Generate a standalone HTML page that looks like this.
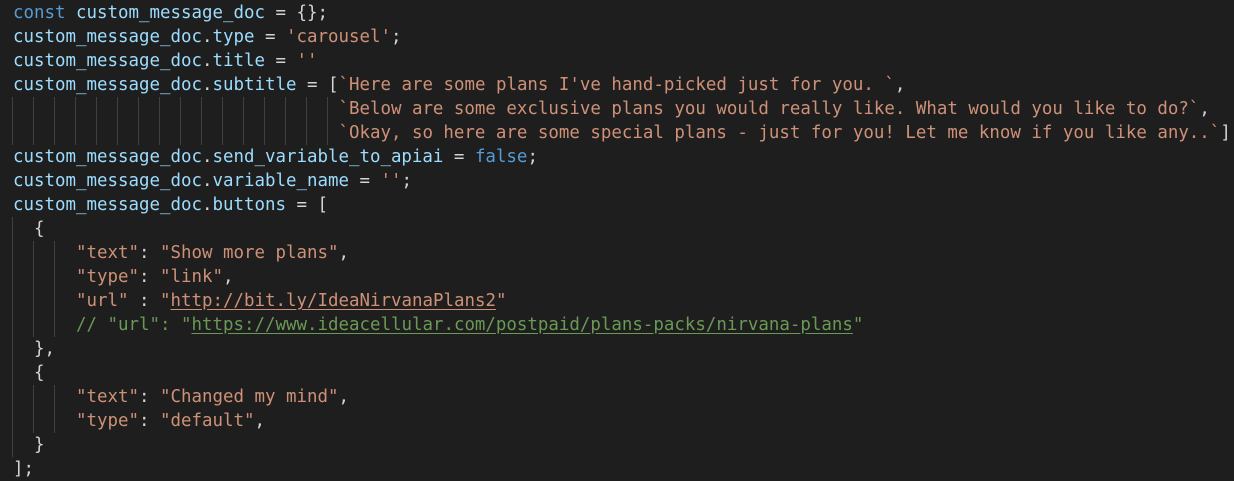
<!DOCTYPE html>
<html><head><meta charset="utf-8"><style>
html,body{margin:0;padding:0;background:#1e1e1e;width:1234px;height:478px;overflow:hidden}
pre{position:absolute;left:13px;top:1px;margin:0;font-family:"DejaVu Sans Mono","Liberation Mono",monospace;font-size:17.45px;line-height:24px;color:#d4d4d4;white-space:pre}
.v{color:#9cdcfe}.k{color:#569cd6}.s{color:#ce9178}.c{color:#6a9955}
.u{text-decoration:underline;text-underline-offset:3px}
.g{position:absolute;width:1px;background:#404040}
</style></head><body>
<div id="guides"></div>
<pre><span class="k">const</span> <span class="v">custom_message_doc</span> = {};
<span class="v">custom_message_doc</span>.<span class="v">type</span> = <span class="s">'carousel'</span>;
<span class="v">custom_message_doc</span>.<span class="v">title</span> = <span class="s">''</span>
<span class="v">custom_message_doc</span>.<span class="v">subtitle</span> = [<span class="s">`Here are some plans I've hand-picked just for you. `</span>,
                               <span class="s">`Below are some exclusive plans you would really like. What would you like to do?`</span>,
                               <span class="s">`Okay, so here are some special plans - just for you! Let me know if you like any..`</span>]
<span class="v">custom_message_doc</span>.<span class="v">send_variable_to_apiai</span> = <span class="k">false</span>;
<span class="v">custom_message_doc</span>.<span class="v">variable_name</span> = <span class="s">''</span>;
<span class="v">custom_message_doc</span>.<span class="v">buttons</span> = [
  {
      <span class="s">"text"</span>: <span class="s">"Show more plans"</span>,
      <span class="s">"type"</span>: <span class="s">"link"</span>,
      <span class="s">"url"</span> : <span class="s">"<span class="u">http://bit.ly/IdeaNirvanaPlans2</span>"</span>
      <span class="c">// "url": "<span class="u">https://www.ideacellular.com/postpaid/plans-packs/nirvana-plans</span>"</span>
  },
  {
      <span class="s">"text"</span>: <span class="s">"Changed my mind"</span>,
      <span class="s">"type"</span>: <span class="s">"default"</span>,
  }
];</pre>
<script>
var G=document.getElementById('guides'),h='';
function g(col,l0,l1){h+='<div class="g" style="left:'+(12+col*10.5).toFixed(1)+'px;top:'+(1+24*l0)+'px;height:'+(24*(l1-l0+1))+'px"></div>';}
for(var c=0;c<=30;c+=2)g(c,4,5);
g(0,9,18);g(2,10,13);g(4,10,13);g(2,16,17);g(4,16,17);
G.innerHTML=h;
</script>
</body></html>
